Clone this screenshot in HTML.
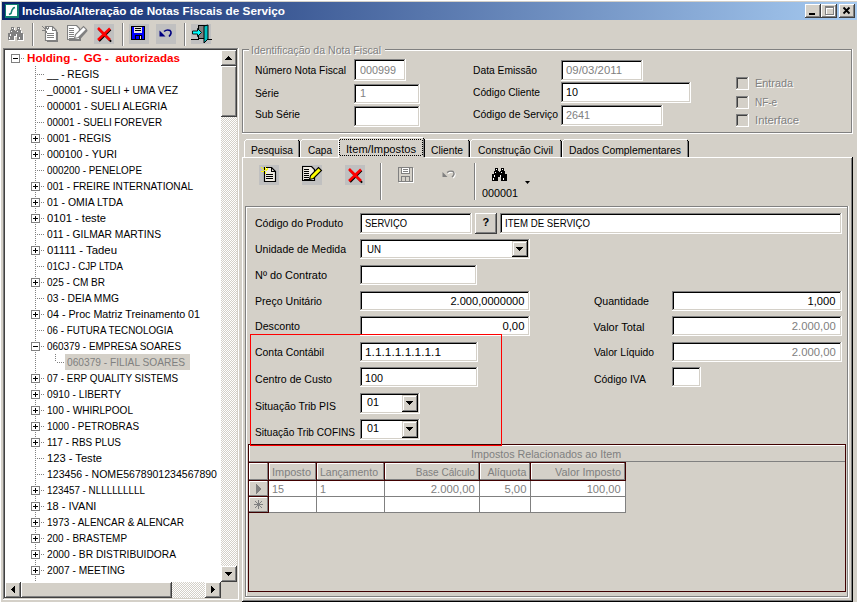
<!DOCTYPE html><html><head><meta charset="utf-8"><style>*{margin:0;padding:0}html,body{width:857px;height:602px;overflow:hidden;background:#D4D0C8}
.a{position:absolute}.t{position:absolute;font-family:"Liberation Sans",sans-serif;font-size:11px;line-height:13px;white-space:pre}</style></head><body><div class="a" style="left:0px;top:0px;width:857px;height:1px;background:#FFFFFF;"></div><div class="a" style="left:0px;top:0px;width:1px;height:602px;background:#FFFFFF;"></div><div class="a" style="left:2px;top:2px;width:855px;height:18px;background:linear-gradient(to right,#0A246A,#A6CAF0);"></div><svg class="a" style="left:5px;top:4px" width="14" height="14" viewBox="0 0 14 14" shape-rendering="crispEdges"><rect x="0" y="0" width="14" height="14" fill="#108070"/><rect x="1" y="1" width="11" height="11" fill="#fff"/><path d="M4 10.5 L6 9.5 L7 6 L8.5 4 L10 3.5" fill="none" stroke="#108070" stroke-width="1.5" shape-rendering="geometricPrecision"/></svg><div class="t" style="left:21.50px;top:5px;color:#fff;font-weight:bold;transform:scaleX(1.0674);transform-origin:0 0;">Inclusão/Alteração de Notas Fiscais de Serviço</div><div class="a" style="left:805px;top:4px;width:16px;height:14px;background:#D4D0C8;"></div><div class="a" style="left:806px;top:16px;width:14px;height:1px;background:#808080;"></div><div class="a" style="left:819px;top:5px;width:1px;height:12px;background:#808080;"></div><div class="a" style="left:805px;top:4px;width:16px;height:1px;background:#FFFFFF;"></div><div class="a" style="left:805px;top:4px;width:1px;height:14px;background:#FFFFFF;"></div><div class="a" style="left:805px;top:17px;width:16px;height:1px;background:#404040;"></div><div class="a" style="left:820px;top:4px;width:1px;height:14px;background:#404040;"></div><div class="a" style="left:821px;top:4px;width:16px;height:14px;background:#D4D0C8;"></div><div class="a" style="left:822px;top:16px;width:14px;height:1px;background:#808080;"></div><div class="a" style="left:835px;top:5px;width:1px;height:12px;background:#808080;"></div><div class="a" style="left:821px;top:4px;width:16px;height:1px;background:#FFFFFF;"></div><div class="a" style="left:821px;top:4px;width:1px;height:14px;background:#FFFFFF;"></div><div class="a" style="left:821px;top:17px;width:16px;height:1px;background:#404040;"></div><div class="a" style="left:836px;top:4px;width:1px;height:14px;background:#404040;"></div><div class="a" style="left:839px;top:4px;width:16px;height:14px;background:#D4D0C8;"></div><div class="a" style="left:840px;top:16px;width:14px;height:1px;background:#808080;"></div><div class="a" style="left:853px;top:5px;width:1px;height:12px;background:#808080;"></div><div class="a" style="left:839px;top:4px;width:16px;height:1px;background:#FFFFFF;"></div><div class="a" style="left:839px;top:4px;width:1px;height:14px;background:#FFFFFF;"></div><div class="a" style="left:839px;top:17px;width:16px;height:1px;background:#404040;"></div><div class="a" style="left:854px;top:4px;width:1px;height:14px;background:#404040;"></div><div class="a" style="left:809px;top:13px;width:6px;height:2px;background:#000;"></div><div class="a" style="left:826px;top:7px;width:9px;height:1px;background:#fff;"></div><div class="a" style="left:826px;top:7px;width:1px;height:9px;background:#fff;"></div><div class="a" style="left:826px;top:15px;width:9px;height:1px;background:#fff;"></div><div class="a" style="left:834px;top:7px;width:1px;height:9px;background:#fff;"></div><div class="a" style="left:826px;top:8px;width:9px;height:1px;background:#fff;"></div><div class="a" style="left:825px;top:6px;width:9px;height:1px;background:#808080;"></div><div class="a" style="left:825px;top:6px;width:1px;height:9px;background:#808080;"></div><div class="a" style="left:825px;top:14px;width:9px;height:1px;background:#808080;"></div><div class="a" style="left:833px;top:6px;width:1px;height:9px;background:#808080;"></div><div class="a" style="left:825px;top:7px;width:9px;height:1px;background:#808080;"></div><svg class="a" style="left:842px;top:6px" width="10" height="9" viewBox="0 0 10 9" shape-rendering="crispEdges"><path d="M1.5 1.5 L7.5 7.5 M7.5 1.5 L1.5 7.5" stroke="#000" stroke-width="1.8" shape-rendering="geometricPrecision"/></svg><svg class="a" style="left:8px;top:27px" width="17" height="15" viewBox="0 0 17 15" shape-rendering="crispEdges"><rect x="4" y="1" width="3" height="3" fill="#fff"/><rect x="10" y="1" width="3" height="3" fill="#fff"/><rect x="3" y="4" width="5" height="3" fill="#fff"/><rect x="9" y="4" width="5" height="3" fill="#fff"/><rect x="1" y="7" width="6" height="7" fill="#fff"/><rect x="10" y="7" width="6" height="7" fill="#fff"/><rect x="6" y="5" width="5" height="5" fill="#fff"/><rect x="3" y="0" width="3" height="3" fill="#808080"/><rect x="9" y="0" width="3" height="3" fill="#808080"/><rect x="2" y="3" width="5" height="3" fill="#808080"/><rect x="8" y="3" width="5" height="3" fill="#808080"/><rect x="0" y="6" width="6" height="7" fill="#808080"/><rect x="9" y="6" width="6" height="7" fill="#808080"/><rect x="5" y="4" width="5" height="5" fill="#808080"/><rect x="4" y="1" width="1" height="1" fill="#fff"/><rect x="10" y="1" width="1" height="1" fill="#fff"/><rect x="3" y="4" width="1" height="1" fill="#fff"/><rect x="9" y="4" width="1" height="1" fill="#fff"/><rect x="2" y="7" width="1" height="1" fill="#fff"/><rect x="2" y="8" width="1" height="1" fill="#fff"/><rect x="8" y="7" width="1" height="1" fill="#fff"/><rect x="8" y="8" width="1" height="1" fill="#fff"/><rect x="1" y="10" width="1" height="1" fill="#fff"/><rect x="1" y="11" width="1" height="1" fill="#fff"/><rect x="11" y="10" width="1" height="1" fill="#fff"/><rect x="11" y="11" width="1" height="1" fill="#fff"/></svg><div class="a" style="left:32px;top:23px;width:1px;height:23px;background:#808080;"></div><div class="a" style="left:33px;top:23px;width:1px;height:23px;background:#FFFFFF;"></div><svg class="a" style="left:42px;top:26px" width="17" height="17" viewBox="0 0 17 17" shape-rendering="crispEdges"><path d="M4.5 15.5 H15.5 V5.5" fill="none" stroke="#808080"/><path d="M3.5 0.5 H10.5 L14.5 4.5 V14.5 H3.5 Z" fill="#fff" stroke="#808080" stroke-width="1.2" shape-rendering="geometricPrecision"/><path d="M10.5 0.5 V4.5 H14.5" fill="none" stroke="#808080"/><rect x="5" y="7" width="7" height="1" fill="#808080"/><rect x="5" y="9" width="7" height="1" fill="#808080"/><rect x="5" y="11" width="7" height="1" fill="#808080"/><path d="M0.5 0.5 L4.5 4.5 M4.5 0 V3 M7 1.5 L5 3.5 M0 4.5 H2.5 M4.5 5 V7" stroke="#808080" stroke-width="1"/></svg><svg class="a" style="left:67px;top:25px" width="21" height="17" viewBox="0 0 21 17" shape-rendering="crispEdges"><path d="M1.5 15.5 H13.5 V10" fill="none" stroke="#808080"/><path d="M12 14 L20 5" stroke="#808080" stroke-width="2" shape-rendering="geometricPrecision"/><path d="M0.5 0.5 H9.5 L12.5 3.5 V14.5 H0.5 Z" fill="#fff" stroke="#808080" stroke-width="1.2" shape-rendering="geometricPrecision"/><rect x="2" y="3" width="5" height="1" fill="#808080"/><rect x="2" y="5" width="5" height="1" fill="#808080"/><rect x="2" y="7" width="5" height="1" fill="#808080"/><rect x="2" y="9" width="5" height="1" fill="#808080"/><rect x="2" y="11" width="5" height="1" fill="#808080"/><rect x="2" y="13" width="5" height="1" fill="#808080"/><path d="M7.5 13.5 L8.5 9.5 L16.5 1.5 L19.5 4.5 L11.5 12.5 Z" fill="#fff" stroke="#808080" stroke-width="1.1" shape-rendering="geometricPrecision"/></svg><div class="a" style="left:94px;top:24px;width:20px;height:20px;background:#C0C0C0;"></div><svg class="a" style="left:96px;top:26px" width="17" height="17" viewBox="0 0 17 17" shape-rendering="crispEdges"><path d="M2.5 3 L14.5 15 M14 3 L2.5 14.5" stroke="#000" stroke-width="2" shape-rendering="geometricPrecision" transform="translate(0.6,0.6)"/><path d="M2 2 L14 14 M14 2.5 L2 14" stroke="#FF0000" stroke-width="2.6" shape-rendering="geometricPrecision"/></svg><div class="a" style="left:122px;top:23px;width:1px;height:23px;background:#808080;"></div><div class="a" style="left:123px;top:23px;width:1px;height:23px;background:#FFFFFF;"></div><div class="a" style="left:129px;top:24px;width:20px;height:20px;background:#C0C0C0;"></div><svg class="a" style="left:131px;top:26px" width="14" height="14" viewBox="0 0 14 14" shape-rendering="crispEdges"><rect x="0" y="0" width="14" height="14" fill="#000"/><rect x="1" y="1" width="12" height="12" fill="#0000FF"/><rect x="3" y="1" width="8" height="6" fill="#E8E4DC"/><rect x="4" y="2" width="6" height="1" fill="#000"/><rect x="4" y="4" width="6" height="1" fill="#000"/><rect x="4" y="9" width="7" height="4" fill="#000"/><rect x="5" y="10" width="3" height="3" fill="#0000FF"/><rect x="9" y="10" width="1" height="3" fill="#E8E4DC"/></svg><div class="a" style="left:156px;top:24px;width:20px;height:20px;background:#C0C0C0;"></div><svg class="a" style="left:158px;top:28px" width="16" height="12" viewBox="0 0 16 12" shape-rendering="crispEdges"><path d="M6 3.5 Q9 1 12 2.5 Q14.5 5 11 8.5" fill="none" stroke="#000080" stroke-width="1.6" shape-rendering="geometricPrecision"/><path d="M1.5 2.5 L1.5 8.5 L7.5 8.5 Z" fill="#000080" shape-rendering="geometricPrecision"/></svg><div class="a" style="left:184px;top:23px;width:1px;height:23px;background:#808080;"></div><div class="a" style="left:185px;top:23px;width:1px;height:23px;background:#FFFFFF;"></div><div class="a" style="left:191px;top:24px;width:20px;height:20px;background:#C0C0C0;"></div><svg class="a" style="left:191px;top:24px" width="21" height="21" viewBox="0 0 21 21" shape-rendering="crispEdges"><rect x="7.5" y="1.5" width="9" height="13" fill="#808080" stroke="#000"/><path d="M13 2 L17 1 L17 15 L13 19 Z" fill="#00C0C0" stroke="#000" stroke-width="1" shape-rendering="geometricPrecision"/><path d="M1.5 7 H6.5 V4.5 L10.5 8.5 L6.5 12.5 V10 H1.5 Z" fill="#00FFFF" stroke="#000" stroke-width="0.9" shape-rendering="geometricPrecision"/><path d="M0 15.5 H7 M17 15.5 H21" stroke="#000"/><rect x="7" y="12" width="1" height="4" fill="#000"/></svg><div class="a" style="left:3px;top:48px;width:236px;height:552px;background:#FFFFFF;"></div><div class="a" style="left:3px;top:48px;width:236px;height:1px;background:#808080;"></div><div class="a" style="left:3px;top:48px;width:1px;height:552px;background:#808080;"></div><div class="a" style="left:3px;top:599px;width:236px;height:1px;background:#FFFFFF;"></div><div class="a" style="left:238px;top:48px;width:1px;height:552px;background:#FFFFFF;"></div><div class="a" style="left:4px;top:49px;width:234px;height:1px;background:#404040;"></div><div class="a" style="left:4px;top:49px;width:1px;height:550px;background:#404040;"></div><div class="a" style="left:4px;top:598px;width:234px;height:1px;background:#D4D0C8;"></div><div class="a" style="left:237px;top:49px;width:1px;height:550px;background:#D4D0C8;"></div><div class="a" style="left:221px;top:50px;width:16px;height:532px;background:repeating-conic-gradient(#fff 0 25%,#D4D0C8 0 50%) 0 0/2px 2px;"></div><div class="a" style="left:221px;top:50px;width:16px;height:16px;background:#D4D0C8;"></div><div class="a" style="left:222px;top:64px;width:14px;height:1px;background:#808080;"></div><div class="a" style="left:235px;top:51px;width:1px;height:14px;background:#808080;"></div><div class="a" style="left:221px;top:50px;width:16px;height:1px;background:#FFFFFF;"></div><div class="a" style="left:221px;top:50px;width:1px;height:16px;background:#FFFFFF;"></div><div class="a" style="left:221px;top:65px;width:16px;height:1px;background:#404040;"></div><div class="a" style="left:236px;top:50px;width:1px;height:16px;background:#404040;"></div><svg class="a" style="left:225px;top:56px" width="7" height="4" viewBox="0 0 7 4" shape-rendering="crispEdges"><rect x="3" y="0" width="1" height="1"/><rect x="2" y="1" width="3" height="1"/><rect x="1" y="2" width="5" height="1"/><rect x="0" y="3" width="7" height="1"/></svg><div class="a" style="left:221px;top:66px;width:16px;height:51px;background:#D4D0C8;"></div><div class="a" style="left:222px;top:115px;width:14px;height:1px;background:#808080;"></div><div class="a" style="left:235px;top:67px;width:1px;height:49px;background:#808080;"></div><div class="a" style="left:221px;top:66px;width:16px;height:1px;background:#FFFFFF;"></div><div class="a" style="left:221px;top:66px;width:1px;height:51px;background:#FFFFFF;"></div><div class="a" style="left:221px;top:116px;width:16px;height:1px;background:#404040;"></div><div class="a" style="left:236px;top:66px;width:1px;height:51px;background:#404040;"></div><div class="a" style="left:221px;top:566px;width:16px;height:16px;background:#D4D0C8;"></div><div class="a" style="left:222px;top:580px;width:14px;height:1px;background:#808080;"></div><div class="a" style="left:235px;top:567px;width:1px;height:14px;background:#808080;"></div><div class="a" style="left:221px;top:566px;width:16px;height:1px;background:#FFFFFF;"></div><div class="a" style="left:221px;top:566px;width:1px;height:16px;background:#FFFFFF;"></div><div class="a" style="left:221px;top:581px;width:16px;height:1px;background:#404040;"></div><div class="a" style="left:236px;top:566px;width:1px;height:16px;background:#404040;"></div><svg class="a" style="left:225px;top:572px" width="7" height="4" viewBox="0 0 7 4" shape-rendering="crispEdges"><rect x="0" y="0" width="7" height="1"/><rect x="1" y="1" width="5" height="1"/><rect x="2" y="2" width="3" height="1"/><rect x="3" y="3" width="1" height="1"/></svg><div class="a" style="left:5px;top:582px;width:216px;height:16px;background:repeating-conic-gradient(#fff 0 25%,#D4D0C8 0 50%) 0 0/2px 2px;"></div><div class="a" style="left:5px;top:582px;width:16px;height:16px;background:#D4D0C8;"></div><div class="a" style="left:6px;top:596px;width:14px;height:1px;background:#808080;"></div><div class="a" style="left:19px;top:583px;width:1px;height:14px;background:#808080;"></div><div class="a" style="left:5px;top:582px;width:16px;height:1px;background:#FFFFFF;"></div><div class="a" style="left:5px;top:582px;width:1px;height:16px;background:#FFFFFF;"></div><div class="a" style="left:5px;top:597px;width:16px;height:1px;background:#404040;"></div><div class="a" style="left:20px;top:582px;width:1px;height:16px;background:#404040;"></div><svg class="a" style="left:11px;top:586px" width="4" height="7" viewBox="0 0 4 7" shape-rendering="crispEdges"><rect x="3" y="0" width="1" height="7"/><rect x="2" y="1" width="1" height="5"/><rect x="1" y="2" width="1" height="3"/><rect x="0" y="3" width="1" height="1"/></svg><div class="a" style="left:21px;top:582px;width:151px;height:16px;background:#D4D0C8;"></div><div class="a" style="left:22px;top:596px;width:149px;height:1px;background:#808080;"></div><div class="a" style="left:170px;top:583px;width:1px;height:14px;background:#808080;"></div><div class="a" style="left:21px;top:582px;width:151px;height:1px;background:#FFFFFF;"></div><div class="a" style="left:21px;top:582px;width:1px;height:16px;background:#FFFFFF;"></div><div class="a" style="left:21px;top:597px;width:151px;height:1px;background:#404040;"></div><div class="a" style="left:171px;top:582px;width:1px;height:16px;background:#404040;"></div><div class="a" style="left:205px;top:582px;width:16px;height:16px;background:#D4D0C8;"></div><div class="a" style="left:206px;top:596px;width:14px;height:1px;background:#808080;"></div><div class="a" style="left:219px;top:583px;width:1px;height:14px;background:#808080;"></div><div class="a" style="left:205px;top:582px;width:16px;height:1px;background:#FFFFFF;"></div><div class="a" style="left:205px;top:582px;width:1px;height:16px;background:#FFFFFF;"></div><div class="a" style="left:205px;top:597px;width:16px;height:1px;background:#404040;"></div><div class="a" style="left:220px;top:582px;width:1px;height:16px;background:#404040;"></div><svg class="a" style="left:211px;top:586px" width="4" height="7" viewBox="0 0 4 7" shape-rendering="crispEdges"><rect x="0" y="0" width="1" height="7"/><rect x="1" y="1" width="1" height="5"/><rect x="2" y="2" width="1" height="3"/><rect x="3" y="3" width="1" height="1"/></svg><div class="a" style="left:221px;top:582px;width:16px;height:16px;background:#D4D0C8;"></div><div class="a" style="left:35px;top:66px;width:1px;height:516px;background:repeating-linear-gradient(to bottom,#808080 0 1px,transparent 1px 2px);"></div><div class="a" style="left:11px;top:54px;width:9px;height:9px;background:#fff;"></div><div class="a" style="left:11px;top:54px;width:9px;height:1px;background:#808080;"></div><div class="a" style="left:11px;top:54px;width:1px;height:9px;background:#808080;"></div><div class="a" style="left:11px;top:62px;width:9px;height:1px;background:#808080;"></div><div class="a" style="left:19px;top:54px;width:1px;height:9px;background:#808080;"></div><div class="a" style="left:13px;top:58px;width:5px;height:1px;background:#000;"></div><div class="a" style="left:21px;top:58px;width:3px;height:1px;background:repeating-linear-gradient(to right,#808080 0 1px,transparent 1px 2px);"></div><div class="t" style="left:26.50px;top:52px;color:#FF0000;font-weight:bold;transform:scaleX(1.0563);transform-origin:0 0;">Holding -  GG -  autorizadas</div><div class="a" style="left:37px;top:74px;width:7px;height:1px;background:repeating-linear-gradient(to right,#808080 0 1px,transparent 1px 2px);"></div><div class="t" style="left:46.50px;top:68px;color:#000;transform:scaleX(0.9244);transform-origin:0 0;">__ - REGIS</div><div class="a" style="left:37px;top:90px;width:7px;height:1px;background:repeating-linear-gradient(to right,#808080 0 1px,transparent 1px 2px);"></div><div class="t" style="left:46.50px;top:84px;color:#000;transform:scaleX(0.9417);transform-origin:0 0;">_00001 - SUELI + UMA VEZ</div><div class="a" style="left:37px;top:106px;width:7px;height:1px;background:repeating-linear-gradient(to right,#808080 0 1px,transparent 1px 2px);"></div><div class="t" style="left:46.50px;top:100px;color:#000;transform:scaleX(0.9344);transform-origin:0 0;">000001 - SUELI ALEGRIA</div><div class="a" style="left:37px;top:122px;width:7px;height:1px;background:repeating-linear-gradient(to right,#808080 0 1px,transparent 1px 2px);"></div><div class="t" style="left:46.50px;top:116px;color:#000;transform:scaleX(0.8957);transform-origin:0 0;">00001 - SUELI FOREVER</div><div class="a" style="left:37px;top:138px;width:7px;height:1px;background:repeating-linear-gradient(to right,#808080 0 1px,transparent 1px 2px);"></div><div class="a" style="left:31px;top:134px;width:9px;height:9px;background:#fff;"></div><div class="a" style="left:31px;top:134px;width:9px;height:1px;background:#808080;"></div><div class="a" style="left:31px;top:134px;width:1px;height:9px;background:#808080;"></div><div class="a" style="left:31px;top:142px;width:9px;height:1px;background:#808080;"></div><div class="a" style="left:39px;top:134px;width:1px;height:9px;background:#808080;"></div><div class="a" style="left:33px;top:138px;width:5px;height:1px;background:#000;"></div><div class="a" style="left:35px;top:136px;width:1px;height:5px;background:#000;"></div><div class="a" style="left:41px;top:138px;width:3px;height:1px;background:repeating-linear-gradient(to right,#808080 0 1px,transparent 1px 2px);"></div><div class="t" style="left:46.50px;top:132px;color:#000;transform:scaleX(0.9345);transform-origin:0 0;">0001 - REGIS</div><div class="a" style="left:37px;top:154px;width:7px;height:1px;background:repeating-linear-gradient(to right,#808080 0 1px,transparent 1px 2px);"></div><div class="a" style="left:31px;top:150px;width:9px;height:9px;background:#fff;"></div><div class="a" style="left:31px;top:150px;width:9px;height:1px;background:#808080;"></div><div class="a" style="left:31px;top:150px;width:1px;height:9px;background:#808080;"></div><div class="a" style="left:31px;top:158px;width:9px;height:1px;background:#808080;"></div><div class="a" style="left:39px;top:150px;width:1px;height:9px;background:#808080;"></div><div class="a" style="left:33px;top:154px;width:5px;height:1px;background:#000;"></div><div class="a" style="left:35px;top:152px;width:1px;height:5px;background:#000;"></div><div class="a" style="left:41px;top:154px;width:3px;height:1px;background:repeating-linear-gradient(to right,#808080 0 1px,transparent 1px 2px);"></div><div class="t" style="left:46.50px;top:148px;color:#000;transform:scaleX(0.9645);transform-origin:0 0;">000100 - YURI</div><div class="a" style="left:37px;top:170px;width:7px;height:1px;background:repeating-linear-gradient(to right,#808080 0 1px,transparent 1px 2px);"></div><div class="t" style="left:46.50px;top:164px;color:#000;transform:scaleX(0.8979);transform-origin:0 0;">000200 - PENELOPE</div><div class="a" style="left:37px;top:186px;width:7px;height:1px;background:repeating-linear-gradient(to right,#808080 0 1px,transparent 1px 2px);"></div><div class="a" style="left:31px;top:182px;width:9px;height:9px;background:#fff;"></div><div class="a" style="left:31px;top:182px;width:9px;height:1px;background:#808080;"></div><div class="a" style="left:31px;top:182px;width:1px;height:9px;background:#808080;"></div><div class="a" style="left:31px;top:190px;width:9px;height:1px;background:#808080;"></div><div class="a" style="left:39px;top:182px;width:1px;height:9px;background:#808080;"></div><div class="a" style="left:33px;top:186px;width:5px;height:1px;background:#000;"></div><div class="a" style="left:35px;top:184px;width:1px;height:5px;background:#000;"></div><div class="a" style="left:41px;top:186px;width:3px;height:1px;background:repeating-linear-gradient(to right,#808080 0 1px,transparent 1px 2px);"></div><div class="t" style="left:46.50px;top:180px;color:#000;transform:scaleX(0.9199);transform-origin:0 0;">001 - FREIRE INTERNATIONAL</div><div class="a" style="left:37px;top:202px;width:7px;height:1px;background:repeating-linear-gradient(to right,#808080 0 1px,transparent 1px 2px);"></div><div class="a" style="left:31px;top:198px;width:9px;height:9px;background:#fff;"></div><div class="a" style="left:31px;top:198px;width:9px;height:1px;background:#808080;"></div><div class="a" style="left:31px;top:198px;width:1px;height:9px;background:#808080;"></div><div class="a" style="left:31px;top:206px;width:9px;height:1px;background:#808080;"></div><div class="a" style="left:39px;top:198px;width:1px;height:9px;background:#808080;"></div><div class="a" style="left:33px;top:202px;width:5px;height:1px;background:#000;"></div><div class="a" style="left:35px;top:200px;width:1px;height:5px;background:#000;"></div><div class="a" style="left:41px;top:202px;width:3px;height:1px;background:repeating-linear-gradient(to right,#808080 0 1px,transparent 1px 2px);"></div><div class="t" style="left:46.50px;top:196px;color:#000;transform:scaleX(0.9515);transform-origin:0 0;">01 - OMIA LTDA</div><div class="a" style="left:37px;top:218px;width:7px;height:1px;background:repeating-linear-gradient(to right,#808080 0 1px,transparent 1px 2px);"></div><div class="a" style="left:31px;top:214px;width:9px;height:9px;background:#fff;"></div><div class="a" style="left:31px;top:214px;width:9px;height:1px;background:#808080;"></div><div class="a" style="left:31px;top:214px;width:1px;height:9px;background:#808080;"></div><div class="a" style="left:31px;top:222px;width:9px;height:1px;background:#808080;"></div><div class="a" style="left:39px;top:214px;width:1px;height:9px;background:#808080;"></div><div class="a" style="left:33px;top:218px;width:5px;height:1px;background:#000;"></div><div class="a" style="left:35px;top:216px;width:1px;height:5px;background:#000;"></div><div class="a" style="left:41px;top:218px;width:3px;height:1px;background:repeating-linear-gradient(to right,#808080 0 1px,transparent 1px 2px);"></div><div class="t" style="left:46.50px;top:212px;color:#000;transform:scaleX(1.0156);transform-origin:0 0;">0101 - teste</div><div class="a" style="left:37px;top:234px;width:7px;height:1px;background:repeating-linear-gradient(to right,#808080 0 1px,transparent 1px 2px);"></div><div class="t" style="left:46.50px;top:228px;color:#000;transform:scaleX(0.9356);transform-origin:0 0;">011 - GILMAR MARTINS</div><div class="a" style="left:37px;top:250px;width:7px;height:1px;background:repeating-linear-gradient(to right,#808080 0 1px,transparent 1px 2px);"></div><div class="a" style="left:31px;top:246px;width:9px;height:9px;background:#fff;"></div><div class="a" style="left:31px;top:246px;width:9px;height:1px;background:#808080;"></div><div class="a" style="left:31px;top:246px;width:1px;height:9px;background:#808080;"></div><div class="a" style="left:31px;top:254px;width:9px;height:1px;background:#808080;"></div><div class="a" style="left:39px;top:246px;width:1px;height:9px;background:#808080;"></div><div class="a" style="left:33px;top:250px;width:5px;height:1px;background:#000;"></div><div class="a" style="left:35px;top:248px;width:1px;height:5px;background:#000;"></div><div class="a" style="left:41px;top:250px;width:3px;height:1px;background:repeating-linear-gradient(to right,#808080 0 1px,transparent 1px 2px);"></div><div class="t" style="left:46.50px;top:244px;color:#000;transform:scaleX(1.0342);transform-origin:0 0;">01111 - Tadeu</div><div class="a" style="left:37px;top:266px;width:7px;height:1px;background:repeating-linear-gradient(to right,#808080 0 1px,transparent 1px 2px);"></div><div class="t" style="left:46.50px;top:260px;color:#000;transform:scaleX(0.8796);transform-origin:0 0;">01CJ - CJP LTDA</div><div class="a" style="left:37px;top:282px;width:7px;height:1px;background:repeating-linear-gradient(to right,#808080 0 1px,transparent 1px 2px);"></div><div class="a" style="left:31px;top:278px;width:9px;height:9px;background:#fff;"></div><div class="a" style="left:31px;top:278px;width:9px;height:1px;background:#808080;"></div><div class="a" style="left:31px;top:278px;width:1px;height:9px;background:#808080;"></div><div class="a" style="left:31px;top:286px;width:9px;height:1px;background:#808080;"></div><div class="a" style="left:39px;top:278px;width:1px;height:9px;background:#808080;"></div><div class="a" style="left:33px;top:282px;width:5px;height:1px;background:#000;"></div><div class="a" style="left:35px;top:280px;width:1px;height:5px;background:#000;"></div><div class="a" style="left:41px;top:282px;width:3px;height:1px;background:repeating-linear-gradient(to right,#808080 0 1px,transparent 1px 2px);"></div><div class="t" style="left:46.50px;top:276px;color:#000;transform:scaleX(0.9123);transform-origin:0 0;">025 - CM BR</div><div class="a" style="left:37px;top:298px;width:7px;height:1px;background:repeating-linear-gradient(to right,#808080 0 1px,transparent 1px 2px);"></div><div class="t" style="left:46.50px;top:292px;color:#000;transform:scaleX(0.9347);transform-origin:0 0;">03 - DEIA MMG</div><div class="a" style="left:37px;top:314px;width:7px;height:1px;background:repeating-linear-gradient(to right,#808080 0 1px,transparent 1px 2px);"></div><div class="a" style="left:31px;top:310px;width:9px;height:9px;background:#fff;"></div><div class="a" style="left:31px;top:310px;width:9px;height:1px;background:#808080;"></div><div class="a" style="left:31px;top:310px;width:1px;height:9px;background:#808080;"></div><div class="a" style="left:31px;top:318px;width:9px;height:1px;background:#808080;"></div><div class="a" style="left:39px;top:310px;width:1px;height:9px;background:#808080;"></div><div class="a" style="left:33px;top:314px;width:5px;height:1px;background:#000;"></div><div class="a" style="left:35px;top:312px;width:1px;height:5px;background:#000;"></div><div class="a" style="left:41px;top:314px;width:3px;height:1px;background:repeating-linear-gradient(to right,#808080 0 1px,transparent 1px 2px);"></div><div class="t" style="left:46.50px;top:308px;color:#000;transform:scaleX(0.9737);transform-origin:0 0;">04 - Proc Matriz Treinamento 01</div><div class="a" style="left:37px;top:330px;width:7px;height:1px;background:repeating-linear-gradient(to right,#808080 0 1px,transparent 1px 2px);"></div><div class="t" style="left:46.50px;top:324px;color:#000;transform:scaleX(0.8936);transform-origin:0 0;">06 - FUTURA TECNOLOGIA</div><div class="a" style="left:37px;top:346px;width:7px;height:1px;background:repeating-linear-gradient(to right,#808080 0 1px,transparent 1px 2px);"></div><div class="a" style="left:31px;top:342px;width:9px;height:9px;background:#fff;"></div><div class="a" style="left:31px;top:342px;width:9px;height:1px;background:#808080;"></div><div class="a" style="left:31px;top:342px;width:1px;height:9px;background:#808080;"></div><div class="a" style="left:31px;top:350px;width:9px;height:1px;background:#808080;"></div><div class="a" style="left:39px;top:342px;width:1px;height:9px;background:#808080;"></div><div class="a" style="left:33px;top:346px;width:5px;height:1px;background:#000;"></div><div class="a" style="left:41px;top:346px;width:3px;height:1px;background:repeating-linear-gradient(to right,#808080 0 1px,transparent 1px 2px);"></div><div class="t" style="left:46.50px;top:340px;color:#000;transform:scaleX(0.9019);transform-origin:0 0;">060379 - EMPRESA SOARES</div><div class="a" style="left:55px;top:354px;width:1px;height:8px;background:repeating-linear-gradient(to bottom,#808080 0 1px,transparent 1px 2px);"></div><div class="a" style="left:57px;top:362px;width:7px;height:1px;background:repeating-linear-gradient(to right,#808080 0 1px,transparent 1px 2px);"></div><div class="a" style="left:65px;top:354px;width:125px;height:16px;background:#D4D0C8;"></div><div class="t" style="left:66.50px;top:356px;color:#808080;transform:scaleX(0.9263);transform-origin:0 0;">060379 - FILIAL SOARES</div><div class="a" style="left:37px;top:378px;width:7px;height:1px;background:repeating-linear-gradient(to right,#808080 0 1px,transparent 1px 2px);"></div><div class="a" style="left:31px;top:374px;width:9px;height:9px;background:#fff;"></div><div class="a" style="left:31px;top:374px;width:9px;height:1px;background:#808080;"></div><div class="a" style="left:31px;top:374px;width:1px;height:9px;background:#808080;"></div><div class="a" style="left:31px;top:382px;width:9px;height:1px;background:#808080;"></div><div class="a" style="left:39px;top:374px;width:1px;height:9px;background:#808080;"></div><div class="a" style="left:33px;top:378px;width:5px;height:1px;background:#000;"></div><div class="a" style="left:35px;top:376px;width:1px;height:5px;background:#000;"></div><div class="a" style="left:41px;top:378px;width:3px;height:1px;background:repeating-linear-gradient(to right,#808080 0 1px,transparent 1px 2px);"></div><div class="t" style="left:46.50px;top:372px;color:#000;transform:scaleX(0.8991);transform-origin:0 0;">07 - ERP QUALITY SISTEMS</div><div class="a" style="left:37px;top:394px;width:7px;height:1px;background:repeating-linear-gradient(to right,#808080 0 1px,transparent 1px 2px);"></div><div class="a" style="left:31px;top:390px;width:9px;height:9px;background:#fff;"></div><div class="a" style="left:31px;top:390px;width:9px;height:1px;background:#808080;"></div><div class="a" style="left:31px;top:390px;width:1px;height:9px;background:#808080;"></div><div class="a" style="left:31px;top:398px;width:9px;height:1px;background:#808080;"></div><div class="a" style="left:39px;top:390px;width:1px;height:9px;background:#808080;"></div><div class="a" style="left:33px;top:394px;width:5px;height:1px;background:#000;"></div><div class="a" style="left:35px;top:392px;width:1px;height:5px;background:#000;"></div><div class="a" style="left:41px;top:394px;width:3px;height:1px;background:repeating-linear-gradient(to right,#808080 0 1px,transparent 1px 2px);"></div><div class="t" style="left:46.50px;top:388px;color:#000;transform:scaleX(0.9261);transform-origin:0 0;">0910 - LIBERTY</div><div class="a" style="left:37px;top:410px;width:7px;height:1px;background:repeating-linear-gradient(to right,#808080 0 1px,transparent 1px 2px);"></div><div class="a" style="left:31px;top:406px;width:9px;height:9px;background:#fff;"></div><div class="a" style="left:31px;top:406px;width:9px;height:1px;background:#808080;"></div><div class="a" style="left:31px;top:406px;width:1px;height:9px;background:#808080;"></div><div class="a" style="left:31px;top:414px;width:9px;height:1px;background:#808080;"></div><div class="a" style="left:39px;top:406px;width:1px;height:9px;background:#808080;"></div><div class="a" style="left:33px;top:410px;width:5px;height:1px;background:#000;"></div><div class="a" style="left:35px;top:408px;width:1px;height:5px;background:#000;"></div><div class="a" style="left:41px;top:410px;width:3px;height:1px;background:repeating-linear-gradient(to right,#808080 0 1px,transparent 1px 2px);"></div><div class="t" style="left:46.50px;top:404px;color:#000;transform:scaleX(0.9135);transform-origin:0 0;">100 - WHIRLPOOL</div><div class="a" style="left:37px;top:426px;width:7px;height:1px;background:repeating-linear-gradient(to right,#808080 0 1px,transparent 1px 2px);"></div><div class="a" style="left:31px;top:422px;width:9px;height:9px;background:#fff;"></div><div class="a" style="left:31px;top:422px;width:9px;height:1px;background:#808080;"></div><div class="a" style="left:31px;top:422px;width:1px;height:9px;background:#808080;"></div><div class="a" style="left:31px;top:430px;width:9px;height:1px;background:#808080;"></div><div class="a" style="left:39px;top:422px;width:1px;height:9px;background:#808080;"></div><div class="a" style="left:33px;top:426px;width:5px;height:1px;background:#000;"></div><div class="a" style="left:35px;top:424px;width:1px;height:5px;background:#000;"></div><div class="a" style="left:41px;top:426px;width:3px;height:1px;background:repeating-linear-gradient(to right,#808080 0 1px,transparent 1px 2px);"></div><div class="t" style="left:46.50px;top:420px;color:#000;transform:scaleX(0.9011);transform-origin:0 0;">1000 - PETROBRAS</div><div class="a" style="left:37px;top:442px;width:7px;height:1px;background:repeating-linear-gradient(to right,#808080 0 1px,transparent 1px 2px);"></div><div class="a" style="left:31px;top:438px;width:9px;height:9px;background:#fff;"></div><div class="a" style="left:31px;top:438px;width:9px;height:1px;background:#808080;"></div><div class="a" style="left:31px;top:438px;width:1px;height:9px;background:#808080;"></div><div class="a" style="left:31px;top:446px;width:9px;height:1px;background:#808080;"></div><div class="a" style="left:39px;top:438px;width:1px;height:9px;background:#808080;"></div><div class="a" style="left:33px;top:442px;width:5px;height:1px;background:#000;"></div><div class="a" style="left:35px;top:440px;width:1px;height:5px;background:#000;"></div><div class="a" style="left:41px;top:442px;width:3px;height:1px;background:repeating-linear-gradient(to right,#808080 0 1px,transparent 1px 2px);"></div><div class="t" style="left:46.50px;top:436px;color:#000;transform:scaleX(0.9054);transform-origin:0 0;">117 - RBS PLUS</div><div class="a" style="left:37px;top:458px;width:7px;height:1px;background:repeating-linear-gradient(to right,#808080 0 1px,transparent 1px 2px);"></div><div class="t" style="left:46.50px;top:452px;color:#000;transform:scaleX(1.0141);transform-origin:0 0;">123 - Teste</div><div class="a" style="left:37px;top:474px;width:7px;height:1px;background:repeating-linear-gradient(to right,#808080 0 1px,transparent 1px 2px);"></div><div class="t" style="left:46.50px;top:468px;color:#000;transform:scaleX(0.9584);transform-origin:0 0;">123456 - NOME5678901234567890</div><div class="a" style="left:37px;top:490px;width:7px;height:1px;background:repeating-linear-gradient(to right,#808080 0 1px,transparent 1px 2px);"></div><div class="a" style="left:31px;top:486px;width:9px;height:9px;background:#fff;"></div><div class="a" style="left:31px;top:486px;width:9px;height:1px;background:#808080;"></div><div class="a" style="left:31px;top:486px;width:1px;height:9px;background:#808080;"></div><div class="a" style="left:31px;top:494px;width:9px;height:1px;background:#808080;"></div><div class="a" style="left:39px;top:486px;width:1px;height:9px;background:#808080;"></div><div class="a" style="left:33px;top:490px;width:5px;height:1px;background:#000;"></div><div class="a" style="left:35px;top:488px;width:1px;height:5px;background:#000;"></div><div class="a" style="left:41px;top:490px;width:3px;height:1px;background:repeating-linear-gradient(to right,#808080 0 1px,transparent 1px 2px);"></div><div class="t" style="left:46.50px;top:484px;color:#000;transform:scaleX(0.8951);transform-origin:0 0;">123457 - NLLLLLLLLL</div><div class="a" style="left:37px;top:506px;width:7px;height:1px;background:repeating-linear-gradient(to right,#808080 0 1px,transparent 1px 2px);"></div><div class="a" style="left:31px;top:502px;width:9px;height:9px;background:#fff;"></div><div class="a" style="left:31px;top:502px;width:9px;height:1px;background:#808080;"></div><div class="a" style="left:31px;top:502px;width:1px;height:9px;background:#808080;"></div><div class="a" style="left:31px;top:510px;width:9px;height:1px;background:#808080;"></div><div class="a" style="left:39px;top:502px;width:1px;height:9px;background:#808080;"></div><div class="a" style="left:33px;top:506px;width:5px;height:1px;background:#000;"></div><div class="a" style="left:35px;top:504px;width:1px;height:5px;background:#000;"></div><div class="a" style="left:41px;top:506px;width:3px;height:1px;background:repeating-linear-gradient(to right,#808080 0 1px,transparent 1px 2px);"></div><div class="t" style="left:46.50px;top:500px;color:#000;">18 - IVANI</div><div class="a" style="left:37px;top:522px;width:7px;height:1px;background:repeating-linear-gradient(to right,#808080 0 1px,transparent 1px 2px);"></div><div class="a" style="left:31px;top:518px;width:9px;height:9px;background:#fff;"></div><div class="a" style="left:31px;top:518px;width:9px;height:1px;background:#808080;"></div><div class="a" style="left:31px;top:518px;width:1px;height:9px;background:#808080;"></div><div class="a" style="left:31px;top:526px;width:9px;height:1px;background:#808080;"></div><div class="a" style="left:39px;top:518px;width:1px;height:9px;background:#808080;"></div><div class="a" style="left:33px;top:522px;width:5px;height:1px;background:#000;"></div><div class="a" style="left:35px;top:520px;width:1px;height:5px;background:#000;"></div><div class="a" style="left:41px;top:522px;width:3px;height:1px;background:repeating-linear-gradient(to right,#808080 0 1px,transparent 1px 2px);"></div><div class="t" style="left:46.50px;top:516px;color:#000;transform:scaleX(0.9109);transform-origin:0 0;">1973 - ALENCAR &amp; ALENCAR</div><div class="a" style="left:37px;top:538px;width:7px;height:1px;background:repeating-linear-gradient(to right,#808080 0 1px,transparent 1px 2px);"></div><div class="a" style="left:31px;top:534px;width:9px;height:9px;background:#fff;"></div><div class="a" style="left:31px;top:534px;width:9px;height:1px;background:#808080;"></div><div class="a" style="left:31px;top:534px;width:1px;height:9px;background:#808080;"></div><div class="a" style="left:31px;top:542px;width:9px;height:1px;background:#808080;"></div><div class="a" style="left:39px;top:534px;width:1px;height:9px;background:#808080;"></div><div class="a" style="left:33px;top:538px;width:5px;height:1px;background:#000;"></div><div class="a" style="left:35px;top:536px;width:1px;height:5px;background:#000;"></div><div class="a" style="left:41px;top:538px;width:3px;height:1px;background:repeating-linear-gradient(to right,#808080 0 1px,transparent 1px 2px);"></div><div class="t" style="left:46.50px;top:532px;color:#000;transform:scaleX(0.9025);transform-origin:0 0;">200 - BRASTEMP</div><div class="a" style="left:37px;top:554px;width:7px;height:1px;background:repeating-linear-gradient(to right,#808080 0 1px,transparent 1px 2px);"></div><div class="a" style="left:31px;top:550px;width:9px;height:9px;background:#fff;"></div><div class="a" style="left:31px;top:550px;width:9px;height:1px;background:#808080;"></div><div class="a" style="left:31px;top:550px;width:1px;height:9px;background:#808080;"></div><div class="a" style="left:31px;top:558px;width:9px;height:1px;background:#808080;"></div><div class="a" style="left:39px;top:550px;width:1px;height:9px;background:#808080;"></div><div class="a" style="left:33px;top:554px;width:5px;height:1px;background:#000;"></div><div class="a" style="left:35px;top:552px;width:1px;height:5px;background:#000;"></div><div class="a" style="left:41px;top:554px;width:3px;height:1px;background:repeating-linear-gradient(to right,#808080 0 1px,transparent 1px 2px);"></div><div class="t" style="left:46.50px;top:548px;color:#000;transform:scaleX(0.9296);transform-origin:0 0;">2000 - BR DISTRIBUIDORA</div><div class="a" style="left:37px;top:570px;width:7px;height:1px;background:repeating-linear-gradient(to right,#808080 0 1px,transparent 1px 2px);"></div><div class="a" style="left:31px;top:566px;width:9px;height:9px;background:#fff;"></div><div class="a" style="left:31px;top:566px;width:9px;height:1px;background:#808080;"></div><div class="a" style="left:31px;top:566px;width:1px;height:9px;background:#808080;"></div><div class="a" style="left:31px;top:574px;width:9px;height:1px;background:#808080;"></div><div class="a" style="left:39px;top:566px;width:1px;height:9px;background:#808080;"></div><div class="a" style="left:33px;top:570px;width:5px;height:1px;background:#000;"></div><div class="a" style="left:35px;top:568px;width:1px;height:5px;background:#000;"></div><div class="a" style="left:41px;top:570px;width:3px;height:1px;background:repeating-linear-gradient(to right,#808080 0 1px,transparent 1px 2px);"></div><div class="t" style="left:46.50px;top:564px;color:#000;transform:scaleX(0.9246);transform-origin:0 0;">2007 - MEETING</div><div class="a" style="left:242px;top:49px;width:610px;height:1px;background:#808080;"></div><div class="a" style="left:242px;top:49px;width:1px;height:84px;background:#808080;"></div><div class="a" style="left:243px;top:50px;width:608px;height:1px;background:#FFFFFF;"></div><div class="a" style="left:243px;top:50px;width:1px;height:82px;background:#FFFFFF;"></div><div class="a" style="left:242px;top:132px;width:610px;height:1px;background:#808080;"></div><div class="a" style="left:851px;top:49px;width:1px;height:84px;background:#808080;"></div><div class="a" style="left:242px;top:133px;width:611px;height:1px;background:#FFFFFF;"></div><div class="a" style="left:852px;top:49px;width:1px;height:85px;background:#FFFFFF;"></div><div class="a" style="left:249px;top:44px;width:136px;height:12px;background:#D4D0C8;"></div><div class="t" style="left:250.50px;top:44px;color:#808080;text-shadow:1px 1px 0 #fff;transform:scaleX(0.9620);transform-origin:0 0;">Identificação da Nota Fiscal</div><div class="t" style="left:254.50px;top:64px;color:#000;transform:scaleX(0.9362);transform-origin:0 0;">Número Nota Fiscal</div><div class="t" style="left:254.50px;top:87px;color:#000;transform:scaleX(0.9343);transform-origin:0 0;">Série</div><div class="t" style="left:254.50px;top:108px;color:#000;transform:scaleX(0.9314);transform-origin:0 0;">Sub Série</div><div class="a" style="left:354px;top:59px;width:52px;height:22px;background:#FFFFFF;"></div><div class="a" style="left:354px;top:59px;width:52px;height:1px;background:#808080;"></div><div class="a" style="left:354px;top:59px;width:1px;height:22px;background:#808080;"></div><div class="a" style="left:354px;top:80px;width:52px;height:1px;background:#FFFFFF;"></div><div class="a" style="left:405px;top:59px;width:1px;height:22px;background:#FFFFFF;"></div><div class="a" style="left:355px;top:60px;width:50px;height:1px;background:#000000;"></div><div class="a" style="left:355px;top:60px;width:1px;height:20px;background:#000000;"></div><div class="a" style="left:355px;top:79px;width:50px;height:1px;background:#D4D0C8;"></div><div class="a" style="left:404px;top:60px;width:1px;height:20px;background:#D4D0C8;"></div><div class="t" style="left:359.50px;top:64px;color:#808080;transform:scaleX(0.9804);transform-origin:0 0;">000999</div><div class="a" style="left:354px;top:84px;width:66px;height:20px;background:#FFFFFF;"></div><div class="a" style="left:354px;top:84px;width:66px;height:1px;background:#808080;"></div><div class="a" style="left:354px;top:84px;width:1px;height:20px;background:#808080;"></div><div class="a" style="left:354px;top:103px;width:66px;height:1px;background:#FFFFFF;"></div><div class="a" style="left:419px;top:84px;width:1px;height:20px;background:#FFFFFF;"></div><div class="a" style="left:355px;top:85px;width:64px;height:1px;background:#000000;"></div><div class="a" style="left:355px;top:85px;width:1px;height:18px;background:#000000;"></div><div class="a" style="left:355px;top:102px;width:64px;height:1px;background:#D4D0C8;"></div><div class="a" style="left:418px;top:85px;width:1px;height:18px;background:#D4D0C8;"></div><div class="t" style="left:359.50px;top:87px;color:#808080;transform:scaleX(0.9796);transform-origin:0 0;">1</div><div class="a" style="left:354px;top:106px;width:66px;height:21px;background:#FFFFFF;"></div><div class="a" style="left:354px;top:106px;width:66px;height:1px;background:#808080;"></div><div class="a" style="left:354px;top:106px;width:1px;height:21px;background:#808080;"></div><div class="a" style="left:354px;top:126px;width:66px;height:1px;background:#FFFFFF;"></div><div class="a" style="left:419px;top:106px;width:1px;height:21px;background:#FFFFFF;"></div><div class="a" style="left:355px;top:107px;width:64px;height:1px;background:#000000;"></div><div class="a" style="left:355px;top:107px;width:1px;height:19px;background:#000000;"></div><div class="a" style="left:355px;top:125px;width:64px;height:1px;background:#D4D0C8;"></div><div class="a" style="left:418px;top:107px;width:1px;height:19px;background:#D4D0C8;"></div><div class="t" style="left:472.50px;top:64px;color:#000;transform:scaleX(0.9345);transform-origin:0 0;">Data Emissão</div><div class="t" style="left:472.50px;top:86px;color:#000;transform:scaleX(0.9285);transform-origin:0 0;">Código Cliente</div><div class="t" style="left:472.50px;top:108px;color:#000;transform:scaleX(0.9456);transform-origin:0 0;">Código de Serviço</div><div class="a" style="left:561px;top:60px;width:82px;height:21px;background:#FFFFFF;"></div><div class="a" style="left:561px;top:60px;width:82px;height:1px;background:#808080;"></div><div class="a" style="left:561px;top:60px;width:1px;height:21px;background:#808080;"></div><div class="a" style="left:561px;top:80px;width:82px;height:1px;background:#FFFFFF;"></div><div class="a" style="left:642px;top:60px;width:1px;height:21px;background:#FFFFFF;"></div><div class="a" style="left:562px;top:61px;width:80px;height:1px;background:#000000;"></div><div class="a" style="left:562px;top:61px;width:1px;height:19px;background:#000000;"></div><div class="a" style="left:562px;top:79px;width:80px;height:1px;background:#D4D0C8;"></div><div class="a" style="left:641px;top:61px;width:1px;height:19px;background:#D4D0C8;"></div><div class="t" style="left:565.50px;top:64px;color:#808080;transform:scaleX(1.0323);transform-origin:0 0;">09/03/2011</div><div class="a" style="left:561px;top:82px;width:130px;height:21px;background:#FFFFFF;"></div><div class="a" style="left:561px;top:82px;width:130px;height:1px;background:#808080;"></div><div class="a" style="left:561px;top:82px;width:1px;height:21px;background:#808080;"></div><div class="a" style="left:561px;top:102px;width:130px;height:1px;background:#FFFFFF;"></div><div class="a" style="left:690px;top:82px;width:1px;height:21px;background:#FFFFFF;"></div><div class="a" style="left:562px;top:83px;width:128px;height:1px;background:#000000;"></div><div class="a" style="left:562px;top:83px;width:1px;height:19px;background:#000000;"></div><div class="a" style="left:562px;top:101px;width:128px;height:1px;background:#D4D0C8;"></div><div class="a" style="left:689px;top:83px;width:1px;height:19px;background:#D4D0C8;"></div><div class="t" style="left:565.50px;top:86px;color:#000;transform:scaleX(0.9796);transform-origin:0 0;">10</div><div class="a" style="left:561px;top:105px;width:102px;height:21px;background:#FFFFFF;"></div><div class="a" style="left:561px;top:105px;width:102px;height:1px;background:#808080;"></div><div class="a" style="left:561px;top:105px;width:1px;height:21px;background:#808080;"></div><div class="a" style="left:561px;top:125px;width:102px;height:1px;background:#FFFFFF;"></div><div class="a" style="left:662px;top:105px;width:1px;height:21px;background:#FFFFFF;"></div><div class="a" style="left:562px;top:106px;width:100px;height:1px;background:#000000;"></div><div class="a" style="left:562px;top:106px;width:1px;height:19px;background:#000000;"></div><div class="a" style="left:562px;top:124px;width:100px;height:1px;background:#D4D0C8;"></div><div class="a" style="left:661px;top:106px;width:1px;height:19px;background:#D4D0C8;"></div><div class="t" style="left:565.50px;top:109px;color:#808080;transform:scaleX(0.9802);transform-origin:0 0;">2641</div><div class="a" style="left:736px;top:77px;width:13px;height:13px;background:#D4D0C8;"></div><div class="a" style="left:736px;top:77px;width:13px;height:1px;background:#808080;"></div><div class="a" style="left:736px;top:77px;width:1px;height:13px;background:#808080;"></div><div class="a" style="left:736px;top:89px;width:13px;height:1px;background:#FFFFFF;"></div><div class="a" style="left:748px;top:77px;width:1px;height:13px;background:#FFFFFF;"></div><div class="a" style="left:737px;top:78px;width:11px;height:1px;background:#404040;"></div><div class="a" style="left:737px;top:78px;width:1px;height:11px;background:#404040;"></div><div class="a" style="left:737px;top:88px;width:11px;height:1px;background:#D4D0C8;"></div><div class="a" style="left:747px;top:78px;width:1px;height:11px;background:#D4D0C8;"></div><div class="t" style="left:754.50px;top:77px;color:#808080;text-shadow:1px 1px 0 #fff;transform:scaleX(0.9862);transform-origin:0 0;">Entrada</div><div class="a" style="left:736px;top:96px;width:13px;height:13px;background:#D4D0C8;"></div><div class="a" style="left:736px;top:96px;width:13px;height:1px;background:#808080;"></div><div class="a" style="left:736px;top:96px;width:1px;height:13px;background:#808080;"></div><div class="a" style="left:736px;top:108px;width:13px;height:1px;background:#FFFFFF;"></div><div class="a" style="left:748px;top:96px;width:1px;height:13px;background:#FFFFFF;"></div><div class="a" style="left:737px;top:97px;width:11px;height:1px;background:#404040;"></div><div class="a" style="left:737px;top:97px;width:1px;height:11px;background:#404040;"></div><div class="a" style="left:737px;top:107px;width:11px;height:1px;background:#D4D0C8;"></div><div class="a" style="left:747px;top:97px;width:1px;height:11px;background:#D4D0C8;"></div><div class="t" style="left:754.50px;top:96px;color:#808080;text-shadow:1px 1px 0 #fff;transform:scaleX(0.8997);transform-origin:0 0;">NF-e</div><div class="a" style="left:736px;top:114px;width:13px;height:13px;background:#D4D0C8;"></div><div class="a" style="left:736px;top:114px;width:13px;height:1px;background:#808080;"></div><div class="a" style="left:736px;top:114px;width:1px;height:13px;background:#808080;"></div><div class="a" style="left:736px;top:126px;width:13px;height:1px;background:#FFFFFF;"></div><div class="a" style="left:748px;top:114px;width:1px;height:13px;background:#FFFFFF;"></div><div class="a" style="left:737px;top:115px;width:11px;height:1px;background:#404040;"></div><div class="a" style="left:737px;top:115px;width:1px;height:11px;background:#404040;"></div><div class="a" style="left:737px;top:125px;width:11px;height:1px;background:#D4D0C8;"></div><div class="a" style="left:747px;top:115px;width:1px;height:11px;background:#D4D0C8;"></div><div class="t" style="left:754.50px;top:114px;color:#808080;text-shadow:1px 1px 0 #fff;transform:scaleX(1.0277);transform-origin:0 0;">Interface</div><div class="a" style="left:244px;top:141px;width:1px;height:16px;background:#FFFFFF;"></div><div class="a" style="left:245px;top:140px;width:1px;height:1px;background:#FFFFFF;"></div><div class="a" style="left:246px;top:139px;width:52px;height:1px;background:#FFFFFF;"></div><div class="a" style="left:298px;top:141px;width:1px;height:16px;background:#808080;"></div><div class="a" style="left:299px;top:141px;width:1px;height:16px;background:#000000;"></div><div class="a" style="left:298px;top:140px;width:1px;height:1px;background:#000000;"></div><div class="t" style="left:250.50px;top:144px;color:#000;transform:scaleX(0.9279);transform-origin:0 0;">Pesquisa</div><div class="a" style="left:300px;top:141px;width:1px;height:16px;background:#FFFFFF;"></div><div class="a" style="left:301px;top:140px;width:1px;height:1px;background:#FFFFFF;"></div><div class="a" style="left:302px;top:139px;width:36px;height:1px;background:#FFFFFF;"></div><div class="a" style="left:338px;top:141px;width:1px;height:16px;background:#808080;"></div><div class="a" style="left:339px;top:141px;width:1px;height:16px;background:#000000;"></div><div class="a" style="left:338px;top:140px;width:1px;height:1px;background:#000000;"></div><div class="t" style="left:307.50px;top:144px;color:#000;transform:scaleX(0.9127);transform-origin:0 0;">Capa</div><div class="a" style="left:423px;top:141px;width:1px;height:16px;background:#FFFFFF;"></div><div class="a" style="left:424px;top:140px;width:1px;height:1px;background:#FFFFFF;"></div><div class="a" style="left:425px;top:139px;width:43px;height:1px;background:#FFFFFF;"></div><div class="a" style="left:468px;top:141px;width:1px;height:16px;background:#808080;"></div><div class="a" style="left:469px;top:141px;width:1px;height:16px;background:#000000;"></div><div class="a" style="left:468px;top:140px;width:1px;height:1px;background:#000000;"></div><div class="t" style="left:430.50px;top:144px;color:#000;transform:scaleX(0.9343);transform-origin:0 0;">Cliente</div><div class="a" style="left:470px;top:141px;width:1px;height:16px;background:#FFFFFF;"></div><div class="a" style="left:471px;top:140px;width:1px;height:1px;background:#FFFFFF;"></div><div class="a" style="left:472px;top:139px;width:88px;height:1px;background:#FFFFFF;"></div><div class="a" style="left:560px;top:141px;width:1px;height:16px;background:#808080;"></div><div class="a" style="left:561px;top:141px;width:1px;height:16px;background:#000000;"></div><div class="a" style="left:560px;top:140px;width:1px;height:1px;background:#000000;"></div><div class="t" style="left:477.50px;top:144px;color:#000;transform:scaleX(0.9364);transform-origin:0 0;">Construção Civil</div><div class="a" style="left:562px;top:141px;width:1px;height:16px;background:#FFFFFF;"></div><div class="a" style="left:563px;top:140px;width:1px;height:1px;background:#FFFFFF;"></div><div class="a" style="left:564px;top:139px;width:123px;height:1px;background:#FFFFFF;"></div><div class="a" style="left:687px;top:141px;width:1px;height:16px;background:#808080;"></div><div class="a" style="left:688px;top:141px;width:1px;height:16px;background:#000000;"></div><div class="a" style="left:687px;top:140px;width:1px;height:1px;background:#000000;"></div><div class="t" style="left:568.50px;top:144px;color:#000;transform:scaleX(0.9442);transform-origin:0 0;">Dados Complementares</div><div class="a" style="left:242px;top:157px;width:611px;height:445px;background:#D4D0C8;"></div><div class="a" style="left:242px;top:157px;width:611px;height:1px;background:#FFFFFF;"></div><div class="a" style="left:242px;top:157px;width:1px;height:445px;background:#FFFFFF;"></div><div class="a" style="left:851px;top:158px;width:1px;height:443px;background:#808080;"></div><div class="a" style="left:852px;top:157px;width:1px;height:445px;background:#000;"></div><div class="a" style="left:243px;top:600px;width:609px;height:1px;background:#808080;"></div><div class="a" style="left:242px;top:601px;width:611px;height:1px;background:#000;"></div><div class="a" style="left:338px;top:137px;width:87px;height:21px;background:#D4D0C8;"></div><div class="a" style="left:338px;top:139px;width:1px;height:19px;background:#FFFFFF;"></div><div class="a" style="left:339px;top:138px;width:1px;height:1px;background:#FFFFFF;"></div><div class="a" style="left:340px;top:137px;width:83px;height:1px;background:#FFFFFF;"></div><div class="a" style="left:423px;top:139px;width:1px;height:18px;background:#808080;"></div><div class="a" style="left:424px;top:139px;width:1px;height:18px;background:#000000;"></div><div class="a" style="left:423px;top:138px;width:1px;height:1px;background:#000000;"></div><div class="t" style="left:345.50px;top:143px;color:#000;transform:scaleX(1.0133);transform-origin:0 0;">Item/Impostos</div><div class="a" style="left:340px;top:139px;width:82px;height:1px;background:repeating-linear-gradient(to right,#000 0 1px,transparent 1px 2px);"></div><div class="a" style="left:340px;top:155px;width:82px;height:1px;background:repeating-linear-gradient(to right,#000 0 1px,transparent 1px 2px);"></div><div class="a" style="left:339px;top:140px;width:1px;height:15px;background:repeating-linear-gradient(to bottom,#000 0 1px,transparent 1px 2px);"></div><div class="a" style="left:422px;top:140px;width:1px;height:15px;background:repeating-linear-gradient(to bottom,#000 0 1px,transparent 1px 2px);"></div><div class="a" style="left:259px;top:165px;width:20px;height:20px;background:#C0C0C0;"></div><svg class="a" style="left:261px;top:167px" width="17" height="17" viewBox="0 0 17 17" shape-rendering="crispEdges"><path d="M3.5 0.5 H10.5 L14.5 4.5 V14.5 H3.5 Z" fill="#F0ECE4" stroke="#000" stroke-width="1.2" shape-rendering="geometricPrecision"/><path d="M10.5 0.5 V4.5 H14.5" fill="none" stroke="#000"/><rect x="5" y="7" width="7" height="1" fill="#000"/><rect x="5" y="9" width="7" height="1" fill="#000"/><rect x="5" y="11" width="7" height="1" fill="#000"/><path d="M0.5 0.5 L4.5 4.5 M4.5 0 V3 M7 1.5 L5 3.5 M0 4.5 H2.5 M4.5 5 V7" stroke="#FFFF00" stroke-width="1"/></svg><div class="a" style="left:302px;top:165px;width:20px;height:20px;background:#C0C0C0;"></div><svg class="a" style="left:302px;top:166px" width="21" height="17" viewBox="0 0 21 17" shape-rendering="crispEdges"><path d="M0.5 0.5 H9.5 L12.5 3.5 V14.5 H0.5 Z" fill="#F0ECE4" stroke="#000" stroke-width="1.2" shape-rendering="geometricPrecision"/><rect x="2" y="3" width="5" height="1" fill="#000"/><rect x="2" y="5" width="5" height="1" fill="#000"/><rect x="2" y="7" width="5" height="1" fill="#000"/><rect x="2" y="9" width="5" height="1" fill="#000"/><rect x="2" y="11" width="5" height="1" fill="#000"/><rect x="2" y="13" width="5" height="1" fill="#000"/><path d="M7.5 13.5 L8.5 9.5 L16.5 1.5 L19.5 4.5 L11.5 12.5 Z" fill="#FFFF00" stroke="#000" stroke-width="1.1" shape-rendering="geometricPrecision"/></svg><div class="a" style="left:345px;top:165px;width:20px;height:20px;background:#C0C0C0;"></div><svg class="a" style="left:347px;top:167px" width="17" height="17" viewBox="0 0 17 17" shape-rendering="crispEdges"><path d="M2.5 3 L14.5 15 M14 3 L2.5 14.5" stroke="#000" stroke-width="2" shape-rendering="geometricPrecision" transform="translate(0.6,0.6)"/><path d="M2 2 L14 14 M14 2.5 L2 14" stroke="#FF0000" stroke-width="2.6" shape-rendering="geometricPrecision"/></svg><div class="a" style="left:380px;top:163px;width:1px;height:37px;background:#808080;"></div><div class="a" style="left:381px;top:163px;width:1px;height:37px;background:#FFFFFF;"></div><svg class="a" style="left:398px;top:167px" width="17" height="17" viewBox="0 0 17 17" shape-rendering="crispEdges"><rect x="1.5" y="1.5" width="14" height="14" fill="none" stroke="#fff"/><rect x="0.5" y="0.5" width="14" height="14" fill="#D4D0C8" stroke="#808080"/><rect x="3.5" y="0.5" width="8" height="6" fill="#fff" stroke="#808080"/><rect x="5" y="2" width="5" height="1" fill="#808080"/><rect x="5" y="4" width="5" height="1" fill="#808080"/><rect x="3.5" y="9.5" width="8" height="5" fill="#D4D0C8" stroke="#808080"/><rect x="7" y="10" width="1" height="4" fill="#808080"/></svg><svg class="a" style="left:442px;top:170px" width="16" height="10" viewBox="0 0 16 10" shape-rendering="crispEdges"><path d="M5 2.5 Q8 0.5 11 1.5 Q13.5 4 10 7" fill="none" stroke="#fff" stroke-width="1.4" transform="translate(1,1)" shape-rendering="geometricPrecision"/><path d="M5 2.5 Q8 0.5 11 1.5 Q13.5 4 10 7" fill="none" stroke="#808080" stroke-width="1.4" shape-rendering="geometricPrecision"/><path d="M0.5 2 L0.5 7 L5.5 7 Z" fill="#808080" shape-rendering="geometricPrecision"/></svg><div class="a" style="left:474px;top:163px;width:1px;height:37px;background:#808080;"></div><div class="a" style="left:475px;top:163px;width:1px;height:37px;background:#FFFFFF;"></div><svg class="a" style="left:492px;top:168px" width="17" height="15" viewBox="0 0 17 15" shape-rendering="crispEdges"><rect x="3" y="0" width="3" height="3" fill="#000"/><rect x="9" y="0" width="3" height="3" fill="#000"/><rect x="2" y="3" width="5" height="3" fill="#000"/><rect x="8" y="3" width="5" height="3" fill="#000"/><rect x="0" y="6" width="6" height="7" fill="#000"/><rect x="9" y="6" width="6" height="7" fill="#000"/><rect x="5" y="4" width="5" height="5" fill="#000"/><rect x="4" y="1" width="1" height="1" fill="#fff"/><rect x="10" y="1" width="1" height="1" fill="#fff"/><rect x="3" y="4" width="1" height="1" fill="#fff"/><rect x="9" y="4" width="1" height="1" fill="#fff"/><rect x="2" y="7" width="1" height="1" fill="#fff"/><rect x="2" y="8" width="1" height="1" fill="#fff"/><rect x="8" y="7" width="1" height="1" fill="#fff"/><rect x="8" y="8" width="1" height="1" fill="#fff"/><rect x="1" y="10" width="1" height="1" fill="#fff"/><rect x="1" y="11" width="1" height="1" fill="#fff"/><rect x="11" y="10" width="1" height="1" fill="#fff"/><rect x="11" y="11" width="1" height="1" fill="#fff"/></svg><div class="t" style="left:481.50px;top:187px;color:#000;transform:scaleX(0.9804);transform-origin:0 0;">000001</div><svg class="a" style="left:525px;top:181px" width="5" height="3" viewBox="0 0 5 3" shape-rendering="crispEdges"><path d="M0 0 H5 L2.5 3 Z" fill="#000" shape-rendering="geometricPrecision"/></svg><div class="a" style="left:245px;top:206px;width:603px;height:1px;background:#808080;"></div><div class="a" style="left:245px;top:206px;width:1px;height:391px;background:#808080;"></div><div class="a" style="left:246px;top:207px;width:601px;height:1px;background:#FFFFFF;"></div><div class="a" style="left:246px;top:207px;width:1px;height:389px;background:#FFFFFF;"></div><div class="a" style="left:245px;top:596px;width:603px;height:1px;background:#808080;"></div><div class="a" style="left:847px;top:206px;width:1px;height:391px;background:#808080;"></div><div class="a" style="left:245px;top:597px;width:604px;height:1px;background:#FFFFFF;"></div><div class="a" style="left:848px;top:206px;width:1px;height:392px;background:#FFFFFF;"></div><div class="t" style="left:254.50px;top:217px;color:#000;transform:scaleX(0.9593);transform-origin:0 0;">Código do Produto</div><div class="a" style="left:360px;top:213px;width:112px;height:21px;background:#FFFFFF;"></div><div class="a" style="left:360px;top:213px;width:112px;height:1px;background:#808080;"></div><div class="a" style="left:360px;top:213px;width:1px;height:21px;background:#808080;"></div><div class="a" style="left:360px;top:233px;width:112px;height:1px;background:#FFFFFF;"></div><div class="a" style="left:471px;top:213px;width:1px;height:21px;background:#FFFFFF;"></div><div class="a" style="left:361px;top:214px;width:110px;height:1px;background:#000000;"></div><div class="a" style="left:361px;top:214px;width:1px;height:19px;background:#000000;"></div><div class="a" style="left:361px;top:232px;width:110px;height:1px;background:#D4D0C8;"></div><div class="a" style="left:470px;top:214px;width:1px;height:19px;background:#D4D0C8;"></div><div class="t" style="left:364.50px;top:217px;color:#000;transform:scaleX(0.8517);transform-origin:0 0;">SERVIÇO</div><div class="a" style="left:475px;top:213px;width:22px;height:21px;background:#D4D0C8;"></div><div class="a" style="left:476px;top:232px;width:20px;height:1px;background:#808080;"></div><div class="a" style="left:495px;top:214px;width:1px;height:19px;background:#808080;"></div><div class="a" style="left:475px;top:213px;width:22px;height:1px;background:#FFFFFF;"></div><div class="a" style="left:475px;top:213px;width:1px;height:21px;background:#FFFFFF;"></div><div class="a" style="left:475px;top:233px;width:22px;height:1px;background:#404040;"></div><div class="a" style="left:496px;top:213px;width:1px;height:21px;background:#404040;"></div><div class="t" style="left:482.50px;top:216px;color:#000;font-weight:bold;">?</div><div class="a" style="left:500px;top:213px;width:342px;height:21px;background:#FFFFFF;"></div><div class="a" style="left:500px;top:213px;width:342px;height:1px;background:#808080;"></div><div class="a" style="left:500px;top:213px;width:1px;height:21px;background:#808080;"></div><div class="a" style="left:500px;top:233px;width:342px;height:1px;background:#FFFFFF;"></div><div class="a" style="left:841px;top:213px;width:1px;height:21px;background:#FFFFFF;"></div><div class="a" style="left:501px;top:214px;width:340px;height:1px;background:#000000;"></div><div class="a" style="left:501px;top:214px;width:1px;height:19px;background:#000000;"></div><div class="a" style="left:501px;top:232px;width:340px;height:1px;background:#D4D0C8;"></div><div class="a" style="left:840px;top:214px;width:1px;height:19px;background:#D4D0C8;"></div><div class="t" style="left:504.50px;top:217px;color:#000;transform:scaleX(0.8764);transform-origin:0 0;">ITEM DE SERVIÇO</div><div class="t" style="left:254.50px;top:243px;color:#000;transform:scaleX(0.9538);transform-origin:0 0;">Unidade de Medida</div><div class="a" style="left:360px;top:239px;width:170px;height:20px;background:#FFFFFF;"></div><div class="a" style="left:360px;top:239px;width:170px;height:1px;background:#808080;"></div><div class="a" style="left:360px;top:239px;width:1px;height:20px;background:#808080;"></div><div class="a" style="left:360px;top:258px;width:170px;height:1px;background:#FFFFFF;"></div><div class="a" style="left:529px;top:239px;width:1px;height:20px;background:#FFFFFF;"></div><div class="a" style="left:361px;top:240px;width:168px;height:1px;background:#000000;"></div><div class="a" style="left:361px;top:240px;width:1px;height:18px;background:#000000;"></div><div class="a" style="left:361px;top:257px;width:168px;height:1px;background:#D4D0C8;"></div><div class="a" style="left:528px;top:240px;width:1px;height:18px;background:#D4D0C8;"></div><div class="a" style="left:512px;top:241px;width:16px;height:16px;background:#D4D0C8;"></div><div class="a" style="left:513px;top:255px;width:14px;height:1px;background:#808080;"></div><div class="a" style="left:526px;top:242px;width:1px;height:14px;background:#808080;"></div><div class="a" style="left:513px;top:242px;width:13px;height:1px;background:#FFFFFF;"></div><div class="a" style="left:513px;top:242px;width:1px;height:13px;background:#FFFFFF;"></div><div class="a" style="left:512px;top:241px;width:16px;height:1px;background:#D4D0C8;"></div><div class="a" style="left:512px;top:241px;width:1px;height:16px;background:#D4D0C8;"></div><div class="a" style="left:512px;top:256px;width:16px;height:1px;background:#000;"></div><div class="a" style="left:527px;top:241px;width:1px;height:16px;background:#000;"></div><svg class="a" style="left:516px;top:247px" width="7" height="4" viewBox="0 0 7 4" shape-rendering="crispEdges"><rect x="0" y="0" width="7" height="1"/><rect x="1" y="1" width="5" height="1"/><rect x="2" y="2" width="3" height="1"/><rect x="3" y="3" width="1" height="1"/></svg><div class="t" style="left:366.50px;top:243px;color:#000;transform:scaleX(0.8810);transform-origin:0 0;">UN</div><div class="t" style="left:254.50px;top:269px;color:#000;transform:scaleX(0.9931);transform-origin:0 0;">Nº do Contrato</div><div class="a" style="left:360px;top:265px;width:117px;height:20px;background:#FFFFFF;"></div><div class="a" style="left:360px;top:265px;width:117px;height:1px;background:#808080;"></div><div class="a" style="left:360px;top:265px;width:1px;height:20px;background:#808080;"></div><div class="a" style="left:360px;top:284px;width:117px;height:1px;background:#FFFFFF;"></div><div class="a" style="left:476px;top:265px;width:1px;height:20px;background:#FFFFFF;"></div><div class="a" style="left:361px;top:266px;width:115px;height:1px;background:#000000;"></div><div class="a" style="left:361px;top:266px;width:1px;height:18px;background:#000000;"></div><div class="a" style="left:361px;top:283px;width:115px;height:1px;background:#D4D0C8;"></div><div class="a" style="left:475px;top:266px;width:1px;height:18px;background:#D4D0C8;"></div><div class="t" style="left:254.50px;top:295px;color:#000;transform:scaleX(0.9612);transform-origin:0 0;">Preço Unitário</div><div class="a" style="left:360px;top:291px;width:170px;height:20px;background:#FFFFFF;"></div><div class="a" style="left:360px;top:291px;width:170px;height:1px;background:#808080;"></div><div class="a" style="left:360px;top:291px;width:1px;height:20px;background:#808080;"></div><div class="a" style="left:360px;top:310px;width:170px;height:1px;background:#FFFFFF;"></div><div class="a" style="left:529px;top:291px;width:1px;height:20px;background:#FFFFFF;"></div><div class="a" style="left:361px;top:292px;width:168px;height:1px;background:#000000;"></div><div class="a" style="left:361px;top:292px;width:1px;height:18px;background:#000000;"></div><div class="a" style="left:361px;top:309px;width:168px;height:1px;background:#D4D0C8;"></div><div class="a" style="left:528px;top:292px;width:1px;height:18px;background:#D4D0C8;"></div><div class="t" style="left:450.58px;top:295px;color:#000;transform:scaleX(1.0079);transform-origin:100% 0;">2.000,0000000</div><div class="t" style="left:254.50px;top:320px;color:#000;transform:scaleX(0.9681);transform-origin:0 0;">Desconto</div><div class="a" style="left:360px;top:316px;width:170px;height:20px;background:#FFFFFF;"></div><div class="a" style="left:360px;top:316px;width:170px;height:1px;background:#808080;"></div><div class="a" style="left:360px;top:316px;width:1px;height:20px;background:#808080;"></div><div class="a" style="left:360px;top:335px;width:170px;height:1px;background:#FFFFFF;"></div><div class="a" style="left:529px;top:316px;width:1px;height:20px;background:#FFFFFF;"></div><div class="a" style="left:361px;top:317px;width:168px;height:1px;background:#000000;"></div><div class="a" style="left:361px;top:317px;width:1px;height:18px;background:#000000;"></div><div class="a" style="left:361px;top:334px;width:168px;height:1px;background:#D4D0C8;"></div><div class="a" style="left:528px;top:317px;width:1px;height:18px;background:#D4D0C8;"></div><div class="t" style="left:502.58px;top:320px;color:#000;transform:scaleX(1.0270);transform-origin:100% 0;">0,00</div><div class="t" style="left:254.50px;top:346px;color:#000;transform:scaleX(0.9480);transform-origin:0 0;">Conta Contábil</div><div class="a" style="left:360px;top:342px;width:118px;height:20px;background:#FFFFFF;"></div><div class="a" style="left:360px;top:342px;width:118px;height:1px;background:#808080;"></div><div class="a" style="left:360px;top:342px;width:1px;height:20px;background:#808080;"></div><div class="a" style="left:360px;top:361px;width:118px;height:1px;background:#FFFFFF;"></div><div class="a" style="left:477px;top:342px;width:1px;height:20px;background:#FFFFFF;"></div><div class="a" style="left:361px;top:343px;width:116px;height:1px;background:#000000;"></div><div class="a" style="left:361px;top:343px;width:1px;height:18px;background:#000000;"></div><div class="a" style="left:361px;top:360px;width:116px;height:1px;background:#D4D0C8;"></div><div class="a" style="left:476px;top:343px;width:1px;height:18px;background:#D4D0C8;"></div><div class="t" style="left:364.50px;top:346px;color:#000;transform:scaleX(1.0804);transform-origin:0 0;">1.1.1.1.1.1.1.1</div><div class="t" style="left:254.50px;top:373px;color:#000;transform:scaleX(0.9612);transform-origin:0 0;">Centro de Custo</div><div class="a" style="left:360px;top:367px;width:118px;height:20px;background:#FFFFFF;"></div><div class="a" style="left:360px;top:367px;width:118px;height:1px;background:#808080;"></div><div class="a" style="left:360px;top:367px;width:1px;height:20px;background:#808080;"></div><div class="a" style="left:360px;top:386px;width:118px;height:1px;background:#FFFFFF;"></div><div class="a" style="left:477px;top:367px;width:1px;height:20px;background:#FFFFFF;"></div><div class="a" style="left:361px;top:368px;width:116px;height:1px;background:#000000;"></div><div class="a" style="left:361px;top:368px;width:1px;height:18px;background:#000000;"></div><div class="a" style="left:361px;top:385px;width:116px;height:1px;background:#D4D0C8;"></div><div class="a" style="left:476px;top:368px;width:1px;height:18px;background:#D4D0C8;"></div><div class="t" style="left:364.50px;top:372px;color:#000;transform:scaleX(0.9804);transform-origin:0 0;">100</div><div class="t" style="left:254.50px;top:400px;color:#000;transform:scaleX(0.9529);transform-origin:0 0;">Situação Trib PIS</div><div class="a" style="left:360px;top:393px;width:60px;height:21px;background:#FFFFFF;"></div><div class="a" style="left:360px;top:393px;width:60px;height:1px;background:#808080;"></div><div class="a" style="left:360px;top:393px;width:1px;height:21px;background:#808080;"></div><div class="a" style="left:360px;top:413px;width:60px;height:1px;background:#FFFFFF;"></div><div class="a" style="left:419px;top:393px;width:1px;height:21px;background:#FFFFFF;"></div><div class="a" style="left:361px;top:394px;width:58px;height:1px;background:#000000;"></div><div class="a" style="left:361px;top:394px;width:1px;height:19px;background:#000000;"></div><div class="a" style="left:361px;top:412px;width:58px;height:1px;background:#D4D0C8;"></div><div class="a" style="left:418px;top:394px;width:1px;height:19px;background:#D4D0C8;"></div><div class="a" style="left:402px;top:395px;width:16px;height:17px;background:#D4D0C8;"></div><div class="a" style="left:403px;top:410px;width:14px;height:1px;background:#808080;"></div><div class="a" style="left:416px;top:396px;width:1px;height:15px;background:#808080;"></div><div class="a" style="left:403px;top:396px;width:13px;height:1px;background:#FFFFFF;"></div><div class="a" style="left:403px;top:396px;width:1px;height:14px;background:#FFFFFF;"></div><div class="a" style="left:402px;top:395px;width:16px;height:1px;background:#D4D0C8;"></div><div class="a" style="left:402px;top:395px;width:1px;height:17px;background:#D4D0C8;"></div><div class="a" style="left:402px;top:411px;width:16px;height:1px;background:#000;"></div><div class="a" style="left:417px;top:395px;width:1px;height:17px;background:#000;"></div><svg class="a" style="left:406px;top:401px" width="7" height="4" viewBox="0 0 7 4" shape-rendering="crispEdges"><rect x="0" y="0" width="7" height="1"/><rect x="1" y="1" width="5" height="1"/><rect x="2" y="2" width="3" height="1"/><rect x="3" y="3" width="1" height="1"/></svg><div class="t" style="left:366.50px;top:396px;color:#000;transform:scaleX(0.9796);transform-origin:0 0;">01</div><div class="t" style="left:254.50px;top:426px;color:#000;transform:scaleX(0.9189);transform-origin:0 0;">Situação Trib COFINS</div><div class="a" style="left:360px;top:419px;width:60px;height:21px;background:#FFFFFF;"></div><div class="a" style="left:360px;top:419px;width:60px;height:1px;background:#808080;"></div><div class="a" style="left:360px;top:419px;width:1px;height:21px;background:#808080;"></div><div class="a" style="left:360px;top:439px;width:60px;height:1px;background:#FFFFFF;"></div><div class="a" style="left:419px;top:419px;width:1px;height:21px;background:#FFFFFF;"></div><div class="a" style="left:361px;top:420px;width:58px;height:1px;background:#000000;"></div><div class="a" style="left:361px;top:420px;width:1px;height:19px;background:#000000;"></div><div class="a" style="left:361px;top:438px;width:58px;height:1px;background:#D4D0C8;"></div><div class="a" style="left:418px;top:420px;width:1px;height:19px;background:#D4D0C8;"></div><div class="a" style="left:402px;top:421px;width:16px;height:17px;background:#D4D0C8;"></div><div class="a" style="left:403px;top:436px;width:14px;height:1px;background:#808080;"></div><div class="a" style="left:416px;top:422px;width:1px;height:15px;background:#808080;"></div><div class="a" style="left:403px;top:422px;width:13px;height:1px;background:#FFFFFF;"></div><div class="a" style="left:403px;top:422px;width:1px;height:14px;background:#FFFFFF;"></div><div class="a" style="left:402px;top:421px;width:16px;height:1px;background:#D4D0C8;"></div><div class="a" style="left:402px;top:421px;width:1px;height:17px;background:#D4D0C8;"></div><div class="a" style="left:402px;top:437px;width:16px;height:1px;background:#000;"></div><div class="a" style="left:417px;top:421px;width:1px;height:17px;background:#000;"></div><svg class="a" style="left:406px;top:427px" width="7" height="4" viewBox="0 0 7 4" shape-rendering="crispEdges"><rect x="0" y="0" width="7" height="1"/><rect x="1" y="1" width="5" height="1"/><rect x="2" y="2" width="3" height="1"/><rect x="3" y="3" width="1" height="1"/></svg><div class="t" style="left:366.50px;top:422px;color:#000;transform:scaleX(0.9796);transform-origin:0 0;">01</div><div class="t" style="left:593.50px;top:295px;color:#000;transform:scaleX(0.9668);transform-origin:0 0;">Quantidade</div><div class="a" style="left:672px;top:291px;width:170px;height:20px;background:#FFFFFF;"></div><div class="a" style="left:672px;top:291px;width:170px;height:1px;background:#808080;"></div><div class="a" style="left:672px;top:291px;width:1px;height:20px;background:#808080;"></div><div class="a" style="left:672px;top:310px;width:170px;height:1px;background:#FFFFFF;"></div><div class="a" style="left:841px;top:291px;width:1px;height:20px;background:#FFFFFF;"></div><div class="a" style="left:673px;top:292px;width:168px;height:1px;background:#000000;"></div><div class="a" style="left:673px;top:292px;width:1px;height:18px;background:#000000;"></div><div class="a" style="left:673px;top:309px;width:168px;height:1px;background:#D4D0C8;"></div><div class="a" style="left:840px;top:292px;width:1px;height:18px;background:#D4D0C8;"></div><div class="t" style="left:808.47px;top:295px;color:#000;transform:scaleX(1.0170);transform-origin:100% 0;">1,000</div><div class="t" style="left:593.50px;top:321px;color:#000;">Valor Total</div><div class="a" style="left:672px;top:316px;width:170px;height:20px;background:#FFFFFF;"></div><div class="a" style="left:672px;top:316px;width:170px;height:1px;background:#808080;"></div><div class="a" style="left:672px;top:316px;width:1px;height:20px;background:#808080;"></div><div class="a" style="left:672px;top:335px;width:170px;height:1px;background:#FFFFFF;"></div><div class="a" style="left:841px;top:316px;width:1px;height:20px;background:#FFFFFF;"></div><div class="a" style="left:673px;top:317px;width:168px;height:1px;background:#000000;"></div><div class="a" style="left:673px;top:317px;width:1px;height:18px;background:#000000;"></div><div class="a" style="left:673px;top:334px;width:168px;height:1px;background:#D4D0C8;"></div><div class="a" style="left:840px;top:317px;width:1px;height:18px;background:#D4D0C8;"></div><div class="t" style="left:793.17px;top:320px;color:#808080;transform:scaleX(1.0274);transform-origin:100% 0;">2.000,00</div><div class="t" style="left:593.50px;top:346px;color:#000;transform:scaleX(0.9373);transform-origin:0 0;">Valor Líquido</div><div class="a" style="left:672px;top:342px;width:170px;height:20px;background:#FFFFFF;"></div><div class="a" style="left:672px;top:342px;width:170px;height:1px;background:#808080;"></div><div class="a" style="left:672px;top:342px;width:1px;height:20px;background:#808080;"></div><div class="a" style="left:672px;top:361px;width:170px;height:1px;background:#FFFFFF;"></div><div class="a" style="left:841px;top:342px;width:1px;height:20px;background:#FFFFFF;"></div><div class="a" style="left:673px;top:343px;width:168px;height:1px;background:#000000;"></div><div class="a" style="left:673px;top:343px;width:1px;height:18px;background:#000000;"></div><div class="a" style="left:673px;top:360px;width:168px;height:1px;background:#D4D0C8;"></div><div class="a" style="left:840px;top:343px;width:1px;height:18px;background:#D4D0C8;"></div><div class="t" style="left:793.17px;top:346px;color:#808080;transform:scaleX(1.0274);transform-origin:100% 0;">2.000,00</div><div class="t" style="left:593.50px;top:373px;color:#000;transform:scaleX(0.9484);transform-origin:0 0;">Código IVA</div><div class="a" style="left:672px;top:367px;width:29px;height:20px;background:#FFFFFF;"></div><div class="a" style="left:672px;top:367px;width:29px;height:1px;background:#808080;"></div><div class="a" style="left:672px;top:367px;width:1px;height:20px;background:#808080;"></div><div class="a" style="left:672px;top:386px;width:29px;height:1px;background:#FFFFFF;"></div><div class="a" style="left:700px;top:367px;width:1px;height:20px;background:#FFFFFF;"></div><div class="a" style="left:673px;top:368px;width:27px;height:1px;background:#000000;"></div><div class="a" style="left:673px;top:368px;width:1px;height:18px;background:#000000;"></div><div class="a" style="left:673px;top:385px;width:27px;height:1px;background:#D4D0C8;"></div><div class="a" style="left:699px;top:368px;width:1px;height:18px;background:#D4D0C8;"></div><div class="a" style="left:248px;top:444px;width:598px;height:148px;background:#D4D0C8;"></div><div class="a" style="left:248px;top:444px;width:598px;height:1px;background:#400000;"></div><div class="a" style="left:248px;top:444px;width:1px;height:148px;background:#400000;"></div><div class="a" style="left:248px;top:591px;width:598px;height:1px;background:#400000;"></div><div class="a" style="left:845px;top:444px;width:1px;height:148px;background:#400000;"></div><div class="a" style="left:249px;top:445px;width:596px;height:1px;background:#FFFFFF;"></div><div class="a" style="left:249px;top:445px;width:1px;height:16px;background:#FFFFFF;"></div><div class="a" style="left:249px;top:461px;width:596px;height:1px;background:#808080;"></div><div class="t" style="left:466.91px;top:448px;color:#808080;transform:scaleX(0.9734);transform-origin:100% 0;">Impostos Relacionados ao Item</div><div class="a" style="left:248px;top:462px;width:378px;height:1px;background:#400000;"></div><div class="a" style="left:249px;top:463px;width:19px;height:17px;background:#D4D0C8;"></div><div class="a" style="left:249px;top:463px;width:19px;height:1px;background:#FFFFFF;"></div><div class="a" style="left:249px;top:463px;width:1px;height:17px;background:#FFFFFF;"></div><div class="a" style="left:249px;top:479px;width:19px;height:1px;background:#808080;"></div><div class="a" style="left:267px;top:463px;width:1px;height:17px;background:#808080;"></div><div class="a" style="left:268px;top:462px;width:1px;height:19px;background:#400000;"></div><div class="a" style="left:249px;top:480px;width:20px;height:1px;background:#400000;"></div><div class="a" style="left:269px;top:463px;width:47px;height:17px;background:#D4D0C8;"></div><div class="a" style="left:269px;top:463px;width:47px;height:1px;background:#FFFFFF;"></div><div class="a" style="left:269px;top:463px;width:1px;height:17px;background:#FFFFFF;"></div><div class="a" style="left:269px;top:479px;width:47px;height:1px;background:#808080;"></div><div class="a" style="left:315px;top:463px;width:1px;height:17px;background:#808080;"></div><div class="a" style="left:316px;top:462px;width:1px;height:19px;background:#400000;"></div><div class="a" style="left:269px;top:480px;width:48px;height:1px;background:#400000;"></div><div class="t" style="left:271.50px;top:466px;color:#808080;transform:scaleX(0.9964);transform-origin:0 0;">Imposto</div><div class="a" style="left:317px;top:463px;width:67px;height:17px;background:#D4D0C8;"></div><div class="a" style="left:317px;top:463px;width:67px;height:1px;background:#FFFFFF;"></div><div class="a" style="left:317px;top:463px;width:1px;height:17px;background:#FFFFFF;"></div><div class="a" style="left:317px;top:479px;width:67px;height:1px;background:#808080;"></div><div class="a" style="left:383px;top:463px;width:1px;height:17px;background:#808080;"></div><div class="a" style="left:384px;top:462px;width:1px;height:19px;background:#400000;"></div><div class="a" style="left:317px;top:480px;width:68px;height:1px;background:#400000;"></div><div class="t" style="left:319.50px;top:466px;color:#808080;transform:scaleX(0.9579);transform-origin:0 0;">Lançamento</div><div class="a" style="left:385px;top:463px;width:94px;height:17px;background:#D4D0C8;"></div><div class="a" style="left:385px;top:463px;width:94px;height:1px;background:#FFFFFF;"></div><div class="a" style="left:385px;top:463px;width:1px;height:17px;background:#FFFFFF;"></div><div class="a" style="left:385px;top:479px;width:94px;height:1px;background:#808080;"></div><div class="a" style="left:478px;top:463px;width:1px;height:17px;background:#808080;"></div><div class="a" style="left:479px;top:462px;width:1px;height:19px;background:#400000;"></div><div class="a" style="left:385px;top:480px;width:95px;height:1px;background:#400000;"></div><div class="t" style="left:410.17px;top:466px;color:#808080;transform:scaleX(0.9101);transform-origin:100% 0;">Base Cálculo</div><div class="a" style="left:480px;top:463px;width:50px;height:17px;background:#D4D0C8;"></div><div class="a" style="left:480px;top:463px;width:50px;height:1px;background:#FFFFFF;"></div><div class="a" style="left:480px;top:463px;width:1px;height:17px;background:#FFFFFF;"></div><div class="a" style="left:480px;top:479px;width:50px;height:1px;background:#808080;"></div><div class="a" style="left:529px;top:463px;width:1px;height:17px;background:#808080;"></div><div class="a" style="left:530px;top:462px;width:1px;height:19px;background:#400000;"></div><div class="a" style="left:480px;top:480px;width:51px;height:1px;background:#400000;"></div><div class="t" style="left:485.62px;top:466px;color:#808080;transform:scaleX(0.9659);transform-origin:100% 0;">Alíquota</div><div class="a" style="left:531px;top:463px;width:94px;height:17px;background:#D4D0C8;"></div><div class="a" style="left:531px;top:463px;width:94px;height:1px;background:#FFFFFF;"></div><div class="a" style="left:531px;top:463px;width:1px;height:17px;background:#FFFFFF;"></div><div class="a" style="left:531px;top:479px;width:94px;height:1px;background:#808080;"></div><div class="a" style="left:624px;top:463px;width:1px;height:17px;background:#808080;"></div><div class="a" style="left:625px;top:462px;width:1px;height:19px;background:#400000;"></div><div class="a" style="left:531px;top:480px;width:95px;height:1px;background:#400000;"></div><div class="t" style="left:553.94px;top:466px;color:#808080;transform:scaleX(0.9842);transform-origin:100% 0;">Valor Imposto</div><div class="a" style="left:249px;top:481px;width:19px;height:15px;background:#D4D0C8;"></div><div class="a" style="left:249px;top:481px;width:19px;height:1px;background:#FFFFFF;"></div><div class="a" style="left:249px;top:481px;width:1px;height:15px;background:#FFFFFF;"></div><div class="a" style="left:249px;top:495px;width:19px;height:1px;background:#808080;"></div><div class="a" style="left:267px;top:481px;width:1px;height:15px;background:#808080;"></div><div class="a" style="left:268px;top:481px;width:1px;height:16px;background:#400000;"></div><div class="a" style="left:249px;top:496px;width:20px;height:1px;background:#400000;"></div><div class="a" style="left:269px;top:481px;width:47px;height:15px;background:#FFFFFF;"></div><div class="a" style="left:316px;top:481px;width:1px;height:16px;background:#808080;"></div><div class="a" style="left:269px;top:496px;width:48px;height:1px;background:#808080;"></div><div class="t" style="left:271.50px;top:483px;color:#808080;transform:scaleX(0.9796);transform-origin:0 0;">15</div><div class="a" style="left:317px;top:481px;width:67px;height:15px;background:#FFFFFF;"></div><div class="a" style="left:384px;top:481px;width:1px;height:16px;background:#808080;"></div><div class="a" style="left:317px;top:496px;width:68px;height:1px;background:#808080;"></div><div class="t" style="left:319.50px;top:483px;color:#808080;transform:scaleX(0.9796);transform-origin:0 0;">1</div><div class="a" style="left:385px;top:481px;width:94px;height:15px;background:#FFFFFF;"></div><div class="a" style="left:479px;top:481px;width:1px;height:16px;background:#808080;"></div><div class="a" style="left:385px;top:496px;width:95px;height:1px;background:#808080;"></div><div class="t" style="left:432.17px;top:483px;color:#808080;transform:scaleX(1.0274);transform-origin:100% 0;">2.000,00</div><div class="a" style="left:480px;top:481px;width:50px;height:15px;background:#FFFFFF;"></div><div class="a" style="left:530px;top:481px;width:1px;height:16px;background:#808080;"></div><div class="a" style="left:480px;top:496px;width:51px;height:1px;background:#808080;"></div><div class="t" style="left:504.58px;top:483px;color:#808080;transform:scaleX(1.0270);transform-origin:100% 0;">5,00</div><div class="a" style="left:531px;top:481px;width:94px;height:15px;background:#FFFFFF;"></div><div class="a" style="left:625px;top:481px;width:1px;height:16px;background:#808080;"></div><div class="a" style="left:531px;top:496px;width:95px;height:1px;background:#808080;"></div><div class="t" style="left:587.34px;top:483px;color:#808080;transform:scaleX(1.0102);transform-origin:100% 0;">100,00</div><div class="a" style="left:249px;top:497px;width:19px;height:15px;background:#D4D0C8;"></div><div class="a" style="left:249px;top:497px;width:19px;height:1px;background:#FFFFFF;"></div><div class="a" style="left:249px;top:497px;width:1px;height:15px;background:#FFFFFF;"></div><div class="a" style="left:249px;top:511px;width:19px;height:1px;background:#808080;"></div><div class="a" style="left:267px;top:497px;width:1px;height:15px;background:#808080;"></div><div class="a" style="left:268px;top:497px;width:1px;height:16px;background:#400000;"></div><div class="a" style="left:249px;top:512px;width:20px;height:1px;background:#400000;"></div><div class="a" style="left:269px;top:497px;width:47px;height:15px;background:#FFFFFF;"></div><div class="a" style="left:316px;top:497px;width:1px;height:16px;background:#808080;"></div><div class="a" style="left:269px;top:512px;width:48px;height:1px;background:#808080;"></div><div class="a" style="left:317px;top:497px;width:67px;height:15px;background:#FFFFFF;"></div><div class="a" style="left:384px;top:497px;width:1px;height:16px;background:#808080;"></div><div class="a" style="left:317px;top:512px;width:68px;height:1px;background:#808080;"></div><div class="a" style="left:385px;top:497px;width:94px;height:15px;background:#FFFFFF;"></div><div class="a" style="left:479px;top:497px;width:1px;height:16px;background:#808080;"></div><div class="a" style="left:385px;top:512px;width:95px;height:1px;background:#808080;"></div><div class="a" style="left:480px;top:497px;width:50px;height:15px;background:#FFFFFF;"></div><div class="a" style="left:530px;top:497px;width:1px;height:16px;background:#808080;"></div><div class="a" style="left:480px;top:512px;width:51px;height:1px;background:#808080;"></div><div class="a" style="left:531px;top:497px;width:94px;height:15px;background:#FFFFFF;"></div><div class="a" style="left:625px;top:497px;width:1px;height:16px;background:#808080;"></div><div class="a" style="left:531px;top:512px;width:95px;height:1px;background:#808080;"></div><svg class="a" style="left:256px;top:484px" width="6" height="10" viewBox="0 0 6 10" shape-rendering="crispEdges"><g fill="#808080"><rect x="0" y="0" width="1" height="1"/><rect x="0" y="1" width="2" height="1"/><rect x="0" y="2" width="3" height="1"/><rect x="0" y="3" width="4" height="1"/><rect x="0" y="4" width="5" height="1"/><rect x="0" y="5" width="5" height="1"/><rect x="0" y="6" width="4" height="1"/><rect x="0" y="7" width="3" height="1"/><rect x="0" y="8" width="2" height="1"/><rect x="0" y="9" width="1" height="1"/></g></svg><svg class="a" style="left:253px;top:500px" width="11" height="10" viewBox="0 0 11 10" shape-rendering="crispEdges"><path d="M5.5 0 V9 M1 4.5 H10 M2 1 L9 8 M9 1 L2 8" stroke="#808080" stroke-width="1" shape-rendering="geometricPrecision"/></svg><div class="a" style="left:250px;top:334px;width:252px;height:1px;background:#FF0000;"></div><div class="a" style="left:250px;top:334px;width:1px;height:112px;background:#FF0000;"></div><div class="a" style="left:250px;top:445px;width:252px;height:1px;background:#FF0000;"></div><div class="a" style="left:501px;top:334px;width:1px;height:112px;background:#FF0000;"></div></body></html>
